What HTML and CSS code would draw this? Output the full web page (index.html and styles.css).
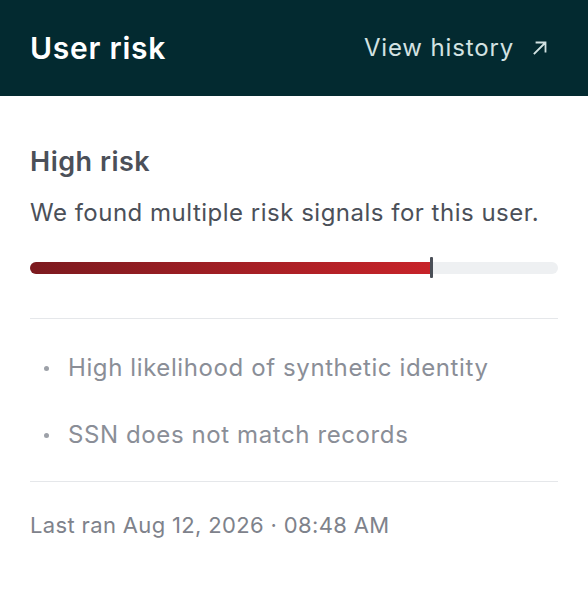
FILE: index.html
```html
<!DOCTYPE html>
<html>
<head>
<meta charset="utf-8">
<link rel="stylesheet" href="styles.css">
</head>
<body>
<div class="card">
  <header class="head">
    <h1 class="title">User risk</h1>
    <a class="link" href="#">View history
      <svg class="arrow" width="16" height="16" viewBox="0 0 16 16" fill="none" stroke="currentColor" stroke-width="1.8" stroke-linecap="square"><path d="M2.5 13.5L13 3M4.5 2.5H13.5V11.5"/></svg>
    </a>
  </header>
  <section class="body">
    <h2 class="level">High risk</h2>
    <p class="desc">We found multiple risk signals for this user.</p>
    <div class="meter">
      <div class="fill" style="width:76%"></div>
      <div class="mark" style="left:76%"></div>
    </div>
    <ul class="signals">
      <li>High likelihood of synthetic identity</li>
      <li>SSN does not match records</li>
    </ul>
    <p class="ran">Last ran Aug 12, 2026 · 08:48 AM</p>
  </section>
</div>
</body>
</html>
```
FILE: styles.css
```css
* { box-sizing: border-box; }
html, body { margin: 0; padding: 0; background: #fff; }
body { font-family: Inter, "Noto Sans", sans-serif; width: 588px; }
.head {
  height: 96px;
  background: #032a30;
  display: flex;
  align-items: center;
  justify-content: space-between;
  padding: 0 40px 0 30px;
}
.title { margin: 0; color: #fff; font-size: 30px; font-weight: 600; letter-spacing: 0.75px; line-height: 36px; }
.link { color: #d3e2e2; text-decoration: none; font-size: 24px; display: flex; align-items: center; gap: 18px; letter-spacing: 0.85px; line-height: 32px; }
.arrow { display: block; }
.body { padding: 48px 30px 0; }
.level { margin: 0; font-size: 27px; font-weight: 600; color: #4b5059; letter-spacing: 0.5px; line-height: 36px; }
.desc { margin: 17px 0 0; font-size: 24px; color: #4b5059; line-height: 32px; letter-spacing: 0.5px; }
.meter { position: relative; margin-top: 33px; height: 12px; border-radius: 6px; background: #eef0f2; }
.fill { height: 100%; border-radius: 6px 0 0 6px; background: linear-gradient(90deg, #7c1a1f, #c72329); }
.mark { position: absolute; top: -5px; width: 2.5px; height: 21px; margin-left: -1px; background: #4a4f57; border-radius: 1px; }
.signals { list-style: none; margin: 44px 0 0; padding: 33px 0 30px; border-top: 1.5px solid #e5e7ea; border-bottom: 1.5px solid #e5e7ea; }
.signals li { position: relative; padding-left: 38px; font-size: 24px; color: #8a8e97; line-height: 32px; letter-spacing: 0.6px; }
.signals li + li { margin-top: 35px; }
.signals li::before { content: ""; position: absolute; left: 14px; top: 14px; width: 5px; height: 5px; border-radius: 50%; background: #9da1a8; }
.ran { margin: 28px 0 0; font-size: 22px; color: #7e828b; line-height: 30px; letter-spacing: 0.35px; }
```
